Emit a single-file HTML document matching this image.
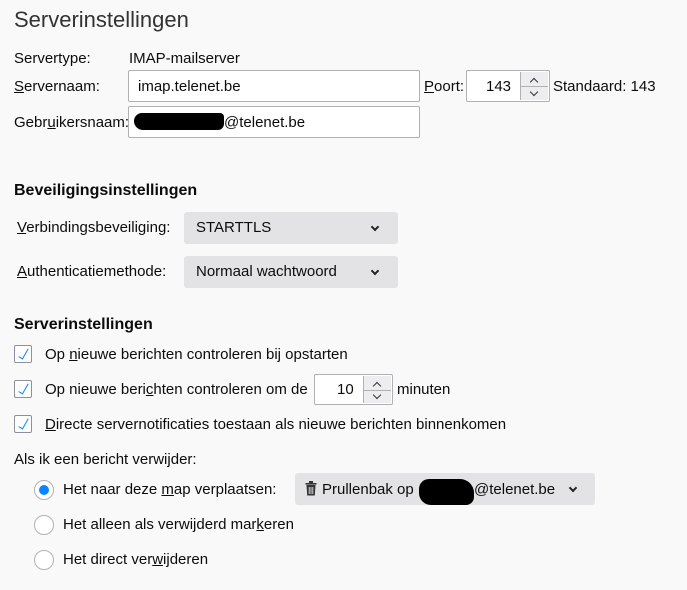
<!DOCTYPE html>
<html><head><style>
body{margin:0;width:687px;height:590px;background:#f9f9f9;font-family:"Liberation Sans",sans-serif;font-size:15px;color:#0c0c0d;position:relative;overflow:hidden}
.a{position:absolute;white-space:nowrap;line-height:18px}
.in{position:absolute;background:#fff;border:1px solid #b1b1b3;border-radius:2px;box-sizing:border-box}
.btn{position:absolute;background:#e3e3e5;border-radius:3px}
.chev{position:absolute;width:4px;height:4px;border-right:2px solid #222;border-bottom:2px solid #222;transform:rotate(45deg)}
.cb{position:absolute;left:14px;width:18px;height:18px;border:1px solid #8f8f9d;border-radius:2px;background:#fff;box-sizing:border-box}
.cb:after{content:"";position:absolute;left:6px;top:1px;width:4px;height:11px;border-right:1.4px solid #0a84ff;border-bottom:1.4px solid #0a84ff;transform:rotate(30deg)}
.rd{position:absolute;left:34px;width:20px;height:20px;border:1px solid #b1b1b3;border-radius:50%;background:#fff;box-sizing:border-box}
.sp{position:absolute;top:1px;bottom:1px;width:27px;background:#ededf0;border-left:1px solid #b1b1b3}
.sp i{position:absolute;left:10px;width:5px;height:5px;border-left:1.8px solid #333;border-top:1.8px solid #333}
u{text-decoration:underline}
</style></head><body>
<div class="a" style="left:14px;top:6px;font-size:22px;line-height:28px;font-weight:300;color:#333">Serverinstellingen</div>

<div class="a" style="left:14px;top:50px">Servertype:</div>
<div class="a" style="left:129px;top:50px">IMAP-mailserver</div>

<div class="a" style="left:14px;top:78px"><u>S</u>ervernaam:</div>
<div class="in" style="left:128px;top:70px;width:292px;height:32px"></div>
<div class="a" style="left:138px;top:78px">imap.telenet.be</div>
<div class="a" style="left:424px;top:78px"><u>P</u>oort:</div>
<div class="in" style="left:466px;top:70px;width:84px;height:32px"><div class="sp" style="right:1px"><i style="top:7px;transform:rotate(45deg)"></i><i style="top:17px;transform:rotate(225deg)"></i><div style="position:absolute;left:0;right:0;top:14px;border-top:1px solid #b1b1b3"></div></div></div>
<div class="a" style="left:486px;top:78px">143</div>
<div class="a" style="left:553px;top:78px">Standaard: 143</div>

<div class="a" style="left:14px;top:114px">Gebr<u>u</u>ikersnaam:</div>
<div class="in" style="left:128px;top:106px;width:292px;height:32px"></div>
<div style="position:absolute;left:134px;top:113px;width:90px;height:17px;background:#000;border-radius:8px 4px 6px 9px"></div>
<div class="a" style="left:224px;top:114px">@telenet.be</div>

<div class="a" style="left:14px;top:181px;font-size:16px;line-height:20px;font-weight:bold">Beveiligingsinstellingen</div>
<div class="a" style="left:17px;top:219px"><u>V</u>erbindingsbeveiliging:</div>
<div class="btn" style="left:184px;top:212px;width:214px;height:32px"><div class="chev" style="left:188px;top:12px"></div></div>
<div class="a" style="left:196px;top:219px">STARTTLS</div>
<div class="a" style="left:17px;top:263px"><u>A</u>uthenticatiemethode:</div>
<div class="btn" style="left:184px;top:256px;width:214px;height:32px"><div class="chev" style="left:188px;top:12px"></div></div>
<div class="a" style="left:196px;top:263px">Normaal wachtwoord</div>

<div class="a" style="left:14px;top:315px;font-size:16px;line-height:20px;font-weight:bold">Serverinstellingen</div>
<div class="cb" style="top:345px"></div>
<div class="a" style="left:45px;top:346px">Op <u>n</u>ieuwe berichten controleren bij opstarten</div>
<div class="cb" style="top:380px"></div>
<div class="a" style="left:45px;top:381px">Op nieuwe beri<u>c</u>hten controleren om de</div>
<div class="in" style="left:314px;top:374px;width:79px;height:31px"><div class="sp" style="right:1px"><i style="top:7px;transform:rotate(45deg)"></i><i style="top:16px;transform:rotate(225deg)"></i><div style="position:absolute;left:0;right:0;top:14px;border-top:1px solid #b1b1b3"></div></div></div>
<div class="a" style="left:337px;top:381px">10</div>
<div class="a" style="left:397px;top:381px">minuten</div>
<div class="cb" style="top:415px"></div>
<div class="a" style="left:45px;top:416px"><u>D</u>irecte servernotificaties toestaan als nieuwe berichten binnenkomen</div>

<div class="a" style="left:14px;top:451px">Als ik een bericht verwijder:</div>
<div class="rd" style="top:480px"><div style="position:absolute;left:4px;top:4px;width:10px;height:10px;border-radius:50%;background:#0a84ff"></div></div>
<div class="a" style="left:63px;top:481px">Het naar deze <u>m</u>ap verplaatsen:</div>
<div class="btn" style="left:295px;top:473px;width:300px;height:32px"><div class="chev" style="left:275px;top:12px"></div></div>
<svg style="position:absolute;left:305px;top:481px" width="12" height="15" viewBox="0 0 12 15"><rect x="0.5" y="2" width="11" height="1.6" fill="#333"/><rect x="4" y="0" width="4" height="2" fill="#333"/><path d="M1.5 4h9l-.7 10.5H2.2z" fill="#333"/><path d="M4.2 6v7M6 6v7M7.8 6v7" stroke="#e3e3e5" stroke-width="0.9"/></svg>
<div class="a" style="left:322px;top:481px">Prullenbak op</div>
<div style="position:absolute;left:419px;top:479px;width:55px;height:26px;background:#000;border-radius:10px 14px 8px 12px"></div>
<div class="a" style="left:474px;top:481px">@telenet.be</div>
<div class="rd" style="top:515px"></div>
<div class="a" style="left:63px;top:516px">Het alleen als verwijderd mar<u>k</u>eren</div>
<div class="rd" style="top:550px"></div>
<div class="a" style="left:63px;top:551px">Het direct ver<u>w</u>ijderen</div>
</body></html>
